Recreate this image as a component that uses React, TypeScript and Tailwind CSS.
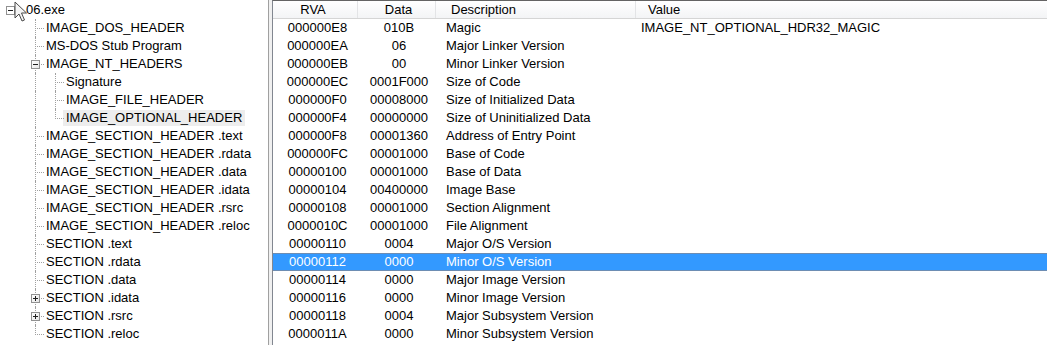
import React from 'react'

interface TreeNode {
  label: string
  level: number
  box?: '+' | '-'
  last?: boolean
  hl?: boolean
}

interface Field {
  rva: string
  data: string
  desc: string
  value?: string
}

const tree: TreeNode[] = [
  { label: '06.exe', level: 0, box: '-' },
  { label: 'IMAGE_DOS_HEADER', level: 1 },
  { label: 'MS-DOS Stub Program', level: 1 },
  { label: 'IMAGE_NT_HEADERS', level: 1, box: '-' },
  { label: 'Signature', level: 2 },
  { label: 'IMAGE_FILE_HEADER', level: 2 },
  { label: 'IMAGE_OPTIONAL_HEADER', level: 2, last: true, hl: true },
  { label: 'IMAGE_SECTION_HEADER .text', level: 1 },
  { label: 'IMAGE_SECTION_HEADER .rdata', level: 1 },
  { label: 'IMAGE_SECTION_HEADER .data', level: 1 },
  { label: 'IMAGE_SECTION_HEADER .idata', level: 1 },
  { label: 'IMAGE_SECTION_HEADER .rsrc', level: 1 },
  { label: 'IMAGE_SECTION_HEADER .reloc', level: 1 },
  { label: 'SECTION .text', level: 1 },
  { label: 'SECTION .rdata', level: 1 },
  { label: 'SECTION .data', level: 1 },
  { label: 'SECTION .idata', level: 1, box: '+' },
  { label: 'SECTION .rsrc', level: 1, box: '+' },
  { label: 'SECTION .reloc', level: 1, last: true },
]

const fields: Field[] = [
  { rva: '000000E8', data: '010B', desc: 'Magic', value: 'IMAGE_NT_OPTIONAL_HDR32_MAGIC' },
  { rva: '000000EA', data: '06', desc: 'Major Linker Version' },
  { rva: '000000EB', data: '00', desc: 'Minor Linker Version' },
  { rva: '000000EC', data: '0001F000', desc: 'Size of Code' },
  { rva: '000000F0', data: '00008000', desc: 'Size of Initialized Data' },
  { rva: '000000F4', data: '00000000', desc: 'Size of Uninitialized Data' },
  { rva: '000000F8', data: '00001360', desc: 'Address of Entry Point' },
  { rva: '000000FC', data: '00001000', desc: 'Base of Code' },
  { rva: '00000100', data: '00001000', desc: 'Base of Data' },
  { rva: '00000104', data: '00400000', desc: 'Image Base' },
  { rva: '00000108', data: '00001000', desc: 'Section Alignment' },
  { rva: '0000010C', data: '00001000', desc: 'File Alignment' },
  { rva: '00000110', data: '0004', desc: 'Major O/S Version' },
  { rva: '00000112', data: '0000', desc: 'Minor O/S Version' },
  { rva: '00000114', data: '0000', desc: 'Major Image Version' },
  { rva: '00000116', data: '0000', desc: 'Minor Image Version' },
  { rva: '00000118', data: '0004', desc: 'Major Subsystem Version' },
  { rva: '0000011A', data: '0000', desc: 'Minor Subsystem Version' },
]

const SELECTED = 13

function ExpandBox({ sign }: { sign: '+' | '-' }) {
  return (
    <div className="absolute left-[6px] top-[5px] w-[9px] h-[9px] border border-[#919191] bg-gradient-to-br from-white to-[#e6e6e6] z-10">
      <div className="absolute left-[1px] top-[3px] w-[5px] h-[1px] bg-[#1e1e1e]" />
      {sign === '+' && <div className="absolute left-[3px] top-[1px] w-[1px] h-[5px] bg-[#1e1e1e]" />}
    </div>
  )
}

// one 20px column of tree guide lines
function Guide({ vert, stub, box }: { vert: 'full' | 'half'; stub?: boolean; box?: '+' | '-' }) {
  return (
    <div className="relative w-[20px] h-full shrink-0">
      <div
        className={`absolute left-[10px] top-0 border-l border-dotted border-[#a0a0a0] ${
          vert === 'full' ? 'h-[18px]' : 'h-[10px]'
        }`}
      />
      {stub && <div className="absolute left-[10px] top-[9px] w-[9px] border-t border-dotted border-[#a0a0a0]" />}
      {box && <ExpandBox sign={box} />}
    </div>
  )
}

function TreeRow({ node }: { node: TreeNode }) {
  if (node.level === 0) {
    return (
      <div className="flex h-[18px] items-center">
        <div className="relative w-[21px] h-full shrink-0">
          <div className="absolute left-[6px] top-[5px] w-[9px] h-[9px] border border-[#919191] bg-white">
            <div className="absolute left-[1px] top-[3px] w-[5px] h-[1px] bg-[#1e1e1e]" />
          </div>
        </div>
        <span className="ml-[5px]">{node.label}</span>
      </div>
    )
  }
  return (
    <div className="flex h-[18px] items-center">
      <div className="w-[25px] shrink-0" />
      {node.level === 1 ? (
        <Guide vert={node.last ? 'half' : 'full'} stub box={node.box} />
      ) : (
        <>
          <Guide vert="full" />
          <Guide vert={node.last ? 'half' : 'full'} stub />
        </>
      )}
      <span className={`-ml-[2px] px-[3px] leading-[16px] whitespace-nowrap ${node.hl ? 'bg-[#ededed]' : ''}`}>
        {node.label}
      </span>
    </div>
  )
}

function Cursor() {
  return (
    <svg className="absolute left-[14px] top-[1px]" width="14" height="22" viewBox="0 0 14 22">
      <path
        d="M1 1 L1 17 L5 13 L8 20 L10.5 19 L7.5 12 L12.5 12 Z"
        fill="#f4f4f4"
        stroke="#4a4a4a"
        strokeWidth="1"
        strokeLinejoin="round"
      />
    </svg>
  )
}

export default function App() {
  return (
    <div className="relative flex w-[1047px] h-[345px] overflow-hidden bg-white text-black text-[13px] font-['Liberation_Sans',Arial,sans-serif]">
      {/* Tree pane */}
      <div className="w-[269px] h-full border-r border-[#a0a0a0] pt-[1px] bg-white shrink-0">
        {tree.map((n, i) => (
          <TreeRow key={i} node={n} />
        ))}
      </div>

      {/* Splitter */}
      <div className="w-[3px] h-full bg-[#f0f0f0] shrink-0" />

      {/* List pane */}
      <div className="flex-1 h-full border-l border-t border-l-[#828790] border-t-[#646464] bg-white">
        <div className="flex h-[18px] items-center border-b border-[#d5d5d5] bg-gradient-to-b from-white to-[#f3f4f6] leading-[17px]">
          <div className="w-[89px] text-center border-r border-[#e3e4e6] -ml-[4px]">RVA</div>
          <div className="w-[74px] text-center border-r border-[#e3e4e6] ml-[4px]">Data</div>
          <div className="w-[200px] pl-[15px] border-r border-[#e3e4e6]">Description</div>
          <div className="flex-1 pl-[12px]">Value</div>
        </div>
        {fields.map((f, i) => (
          <div
            key={f.rva}
            className={`flex h-[18px] items-center ${
              i === SELECTED ? 'bg-[#3399ff] text-white border-y border-[#6d8db3]' : ''
            }`}
          >
            <div className="w-[89px] text-center">{f.rva}</div>
            <div className="w-[74px] text-center">{f.data}</div>
            <div className="w-[200px] pl-[10px] whitespace-nowrap">{f.desc}</div>
            <div className="flex-1 pl-[5px] whitespace-nowrap">{f.value ?? ''}</div>
          </div>
        ))}
      </div>

      <Cursor />
    </div>
  )
}
